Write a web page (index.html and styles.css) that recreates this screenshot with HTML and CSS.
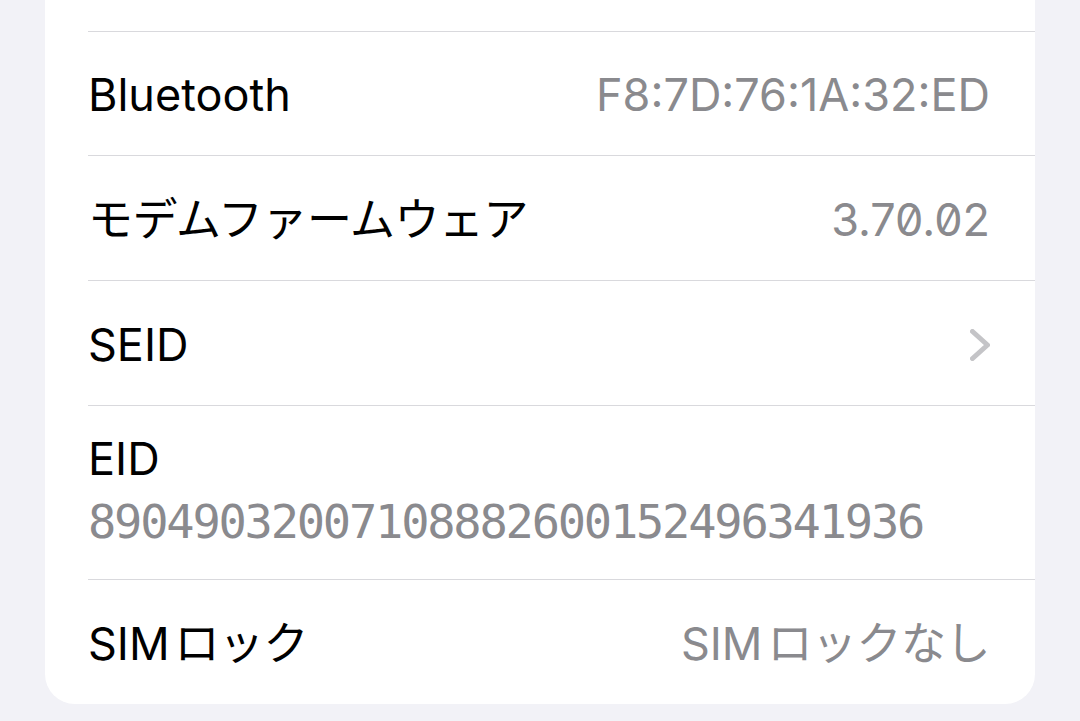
FILE: index.html
```html
<!DOCTYPE html>
<html lang="ja">
	<head>
		<meta charset="utf-8">
		<title>情報</title>
		<link rel="stylesheet" href="styles.css">
	</head>
	<body>
		<div class="card">
			<div class="row">
				<span class="label">Bluetooth</span>
				<span class="value">F8:7D:76:1A:32:ED</span>
			</div>
			<div class="row">
				<span class="label ja">モデムファームウェア</span>
				<span class="value zero">3.70.02</span>
			</div>
			<div class="row">
				<span class="label">SEID</span>
				<svg class="chevron" width="20" height="32" viewBox="0 0 20 32">
					<polyline points="2.5,2.5 17.5,16 2.5,29.5" fill="none" stroke="#c4c4c7" stroke-width="5" stroke-linecap="round" stroke-linejoin="round" />
				</svg>
			</div>
			<div class="row row-tall">
				<div class="label">EID</div>
				<div class="value mono">89049032007108882600152496341936</div>
			</div>
			<div class="row">
				<span class="label"><span class="latin">SIM</span><span class="ja">ロック</span></span>
				<span class="value"><span class="latin">SIM</span><span class="ja">ロックなし</span></span>
			</div>
		</div>
	</body>
</html>
```

FILE: styles.css
```css
body {
	margin: 0;
	background: #f2f2f7;
	font-family: Inter, "Noto Sans CJK JP", sans-serif;
	font-size: 45px;
	overflow: hidden;
}

.card {
	margin-left: 45px;
	width: 990px;
	padding-top: 31px;
	background: #ffffff;
	border-radius: 0 0 30px 30px;
}

.row {
	box-sizing: border-box;
	height: 125px;
	margin-left: 43px;
	padding-right: 45px;
	padding-top: 3px;
	border-top: 1px solid #d9d9dd;
	display: flex;
	align-items: center;
	justify-content: space-between;
}

.row:first-child {
	height: 124px;
}

.row-tall {
	height: 174px;
	flex-direction: column;
	align-items: flex-start;
	justify-content: flex-start;
	padding-top: 26px;
}

.label {
	color: #000000;
	line-height: 54px;
}

.value {
	color: #8a8a8e;
	line-height: 54px;
}

.ja {
	letter-spacing: -0.5px;
}

.latin {
	margin-right: 5px;
}

.zero {
	font-feature-settings: "zero";
}

.mono {
	font-family: "DejaVu Sans Mono", monospace;
	font-size: 47px;
	letter-spacing: -2.2px;
	line-height: 60px;
	margin-top: 6px;
}

.chevron {
	display: block;
}
```
